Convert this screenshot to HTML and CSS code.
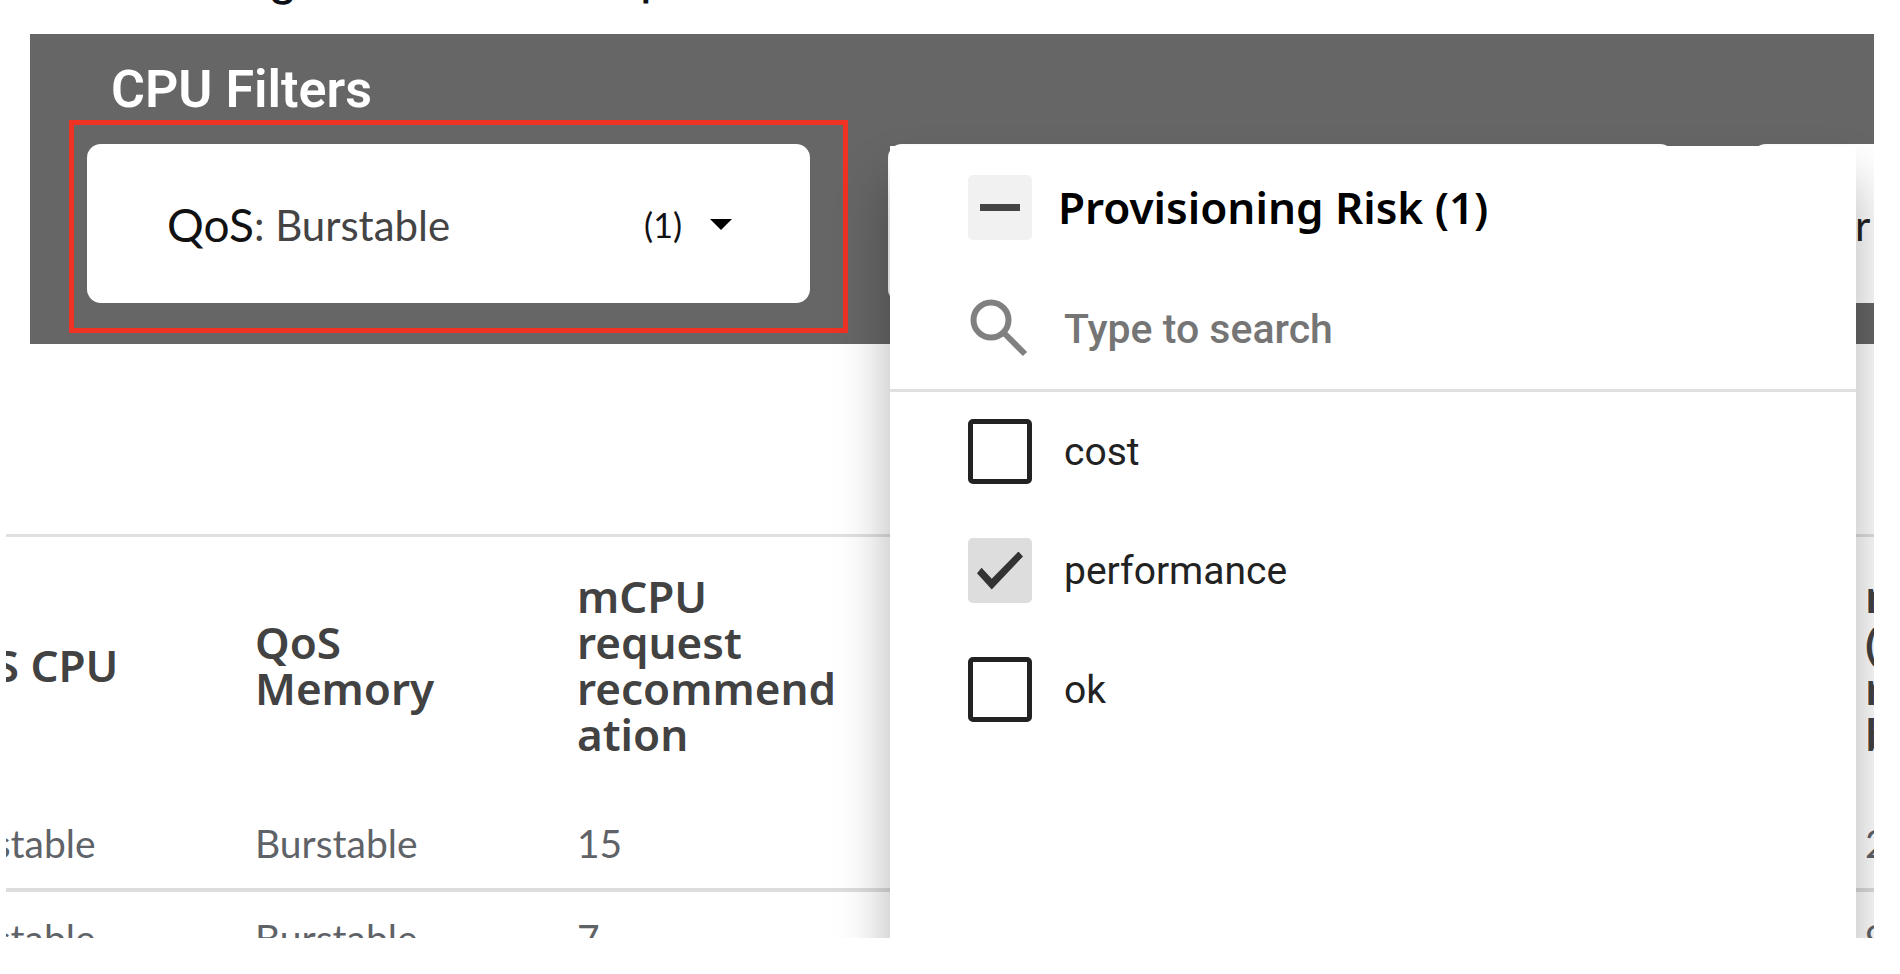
FILE: index.html
```html
<!DOCTYPE html>
<html lang="en">
<head>
  <meta charset="UTF-8">
  <title>CPU Filters</title>
  <link rel="stylesheet" href="styles.css">
</head>
<body>

  <div class="intro"><span>g</span><span>p</span></div>

  <main class="report">
    <section class="filter-bar">
      <h2>CPU Filters</h2>
      <div class="filters">
        <div class="filter qos">
          <button type="button" class="filter-button">
            <span class="name">QoS</span><span class="value">: Burstable</span>
            <span class="count">(1)</span>
            <svg class="caret" viewBox="0 0 22 11"><path d="M0 0h22L11 11z"/></svg>
          </button>
          <div class="highlight"></div>
        </div>

        <div class="filter risk">
          <button type="button" class="filter-button" aria-label="Provisioning Risk"></button>
          <div class="menu">
            <label class="menu-title">
              <input type="checkbox" class="box partial">
              <span>Provisioning Risk (1)</span>
            </label>
            <label class="search">
              <svg viewBox="0 0 64 64"><circle cx="23" cy="23" r="17.500"/><path d="M36 36l21 21"/></svg>
              <input type="text" placeholder="Type to search">
            </label>
            <label class="option"><input type="checkbox" class="box"><span>cost</span></label>
            <label class="option"><input type="checkbox" class="box" checked><span>performance</span></label>
            <label class="option"><input type="checkbox" class="box"><span>ok</span></label>
          </div>
        </div>

        <div class="filter next">
          <button type="button" class="filter-button"><span class="value">r</span></button>
        </div>
      </div>
    </section>

    <table class="workloads">
      <thead>
        <tr>
          <th>QoS CPU</th>
          <th>QoS Memory</th>
          <th>mCPU request recommendation</th>
          <th></th>
          <th></th>
          <th></th>
          <th>m<br>(<br>r<br>b</th>
        </tr>
      </thead>
      <tbody>
        <tr>
          <td>Burstable</td>
          <td>Burstable</td>
          <td>15</td>
          <td></td>
          <td></td>
          <td></td>
          <td>2</td>
        </tr>
        <tr>
          <td>Burstable</td>
          <td>Burstable</td>
          <td>7</td>
          <td></td>
          <td></td>
          <td></td>
          <td>9</td>
        </tr>
      </tbody>
    </table>
  </main>

</body>
</html>
```
FILE: styles.css
```css
* {
  box-sizing: border-box;
}

body {
  margin: 0;
  height: 100vh;
  display: flex;
  flex-direction: column;
  overflow: hidden;
  background: #fff;
  font-family: Lato, sans-serif;
}

/* last line of the paragraph above the report */
.intro {
  flex: none;
  display: flex;
  align-items: flex-end;
  gap: 344px;
  height: 5px;
  padding-left: 269px;
  margin-bottom: 29px;
  overflow: hidden;
  color: #0d1117;
  font: 500 44px/52px Inter, sans-serif;
}

.report {
  flex: 1;
  min-height: 0;
  margin: 0 26px 36px 6px;
  overflow: hidden;
}

.filter-bar {
  margin-left: 24px;
  padding: 26px 0 41px 57px;
  background: #666;
}

.filter-bar h2 {
  margin: 0 0 24px 24px;
  color: #fff;
  font: 600 52px/60px Roboto, sans-serif;
}

.filters {
  display: flex;
  gap: 78px;
}

.filter {
  position: relative;
  flex: none;
}

.qos {
  width: 723px;
}

.risk {
  width: 786px;
  z-index: 1;
}

.next {
  width: 723px;
}

.filter-button {
  display: flex;
  align-items: center;
  width: 100%;
  height: 159px;
  padding: 2px 78px 0 80px;
  border: 0;
  border-radius: 14px;
  background: #fff;
  color: #111;
  font: 42px/48px Lato, sans-serif;
}

.next .filter-button {
  padding-left: 103px;
}

.filter-button .name {
  font-size: 46px;
}

.filter-button .value {
  color: #444;
}

.next .value {
  color: #222;
}

.filter-button .count {
  margin-left: auto;
  font-size: 34px;
}

.caret {
  width: 22px;
  height: 11px;
  margin-left: 28px;
}

.highlight {
  position: absolute;
  inset: -24px -38px -30px -18px;
  border: 5px solid #ee3224;
  pointer-events: none;
}

.menu {
  position: absolute;
  top: 2px;
  left: 2px;
  width: 966px;
  height: 900px;
  background: #fff;
  box-shadow: 0 36px 50px rgba(0, 0, 0, 0.3);
}

.menu label {
  display: flex;
  align-items: center;
  gap: 32px;
  padding: 0 78px;
}

.menu .menu-title {
  gap: 26px;
  height: 122px;
  color: #000;
  font: 600 44px/50px "Noto Sans", sans-serif;
}

.menu .search {
  height: 124px;
  border-bottom: 3px solid #e0e0e0;
}

.search svg {
  width: 64px;
  height: 64px;
  fill: none;
  stroke: #808080;
  stroke-width: 6;
}

.search input {
  flex: 1;
  padding: 0;
  border: 0;
  outline: 0;
  font: 500 41px/50px Roboto, sans-serif;
}

.search input::placeholder {
  color: #757575;
}

.menu .option {
  height: 119px;
  color: #222;
  font: 39px/50px Roboto, sans-serif;
}

.box {
  appearance: none;
  flex: none;
  display: grid;
  place-items: center;
  width: 64px;
  height: 65px;
  margin: 0;
  border: 5px solid #222;
  border-radius: 5px;
}

.box:checked {
  border: 0;
  background: #ddd;
}

.box:checked::before {
  content: "";
  width: 46px;
  height: 38px;
  background: #333;
  clip-path: polygon(0 57%, 10% 43%, 32% 72%, 90% 0, 100% 13%, 32% 100%);
}

.box.partial {
  border: 0;
  background: #f1f1f1;
}

.box.partial::before {
  content: "";
  width: 40px;
  height: 7px;
  background: #444;
}

/* scrolled sideways, so the first column is cut */
.workloads {
  width: 2254px;
  margin: 190px 0 0 -105px;
  table-layout: fixed;
  border-collapse: separate;
  border-spacing: 0;
  border-top: 3px solid #e0e0e0;
}

.workloads th,
.workloads td {
  padding: 0 30px 0 32px;
  text-align: left;
  overflow-wrap: break-word;
}

.workloads th {
  height: 260px;
  padding-bottom: 4px;
  color: #424242;
  font: 600 44px/46px "Noto Sans", sans-serif;
}

.workloads td {
  height: 95px;
  border-bottom: 4px solid #ddd;
  color: #5f6368;
  font-size: 39px;
  line-height: 48px;
}
```
